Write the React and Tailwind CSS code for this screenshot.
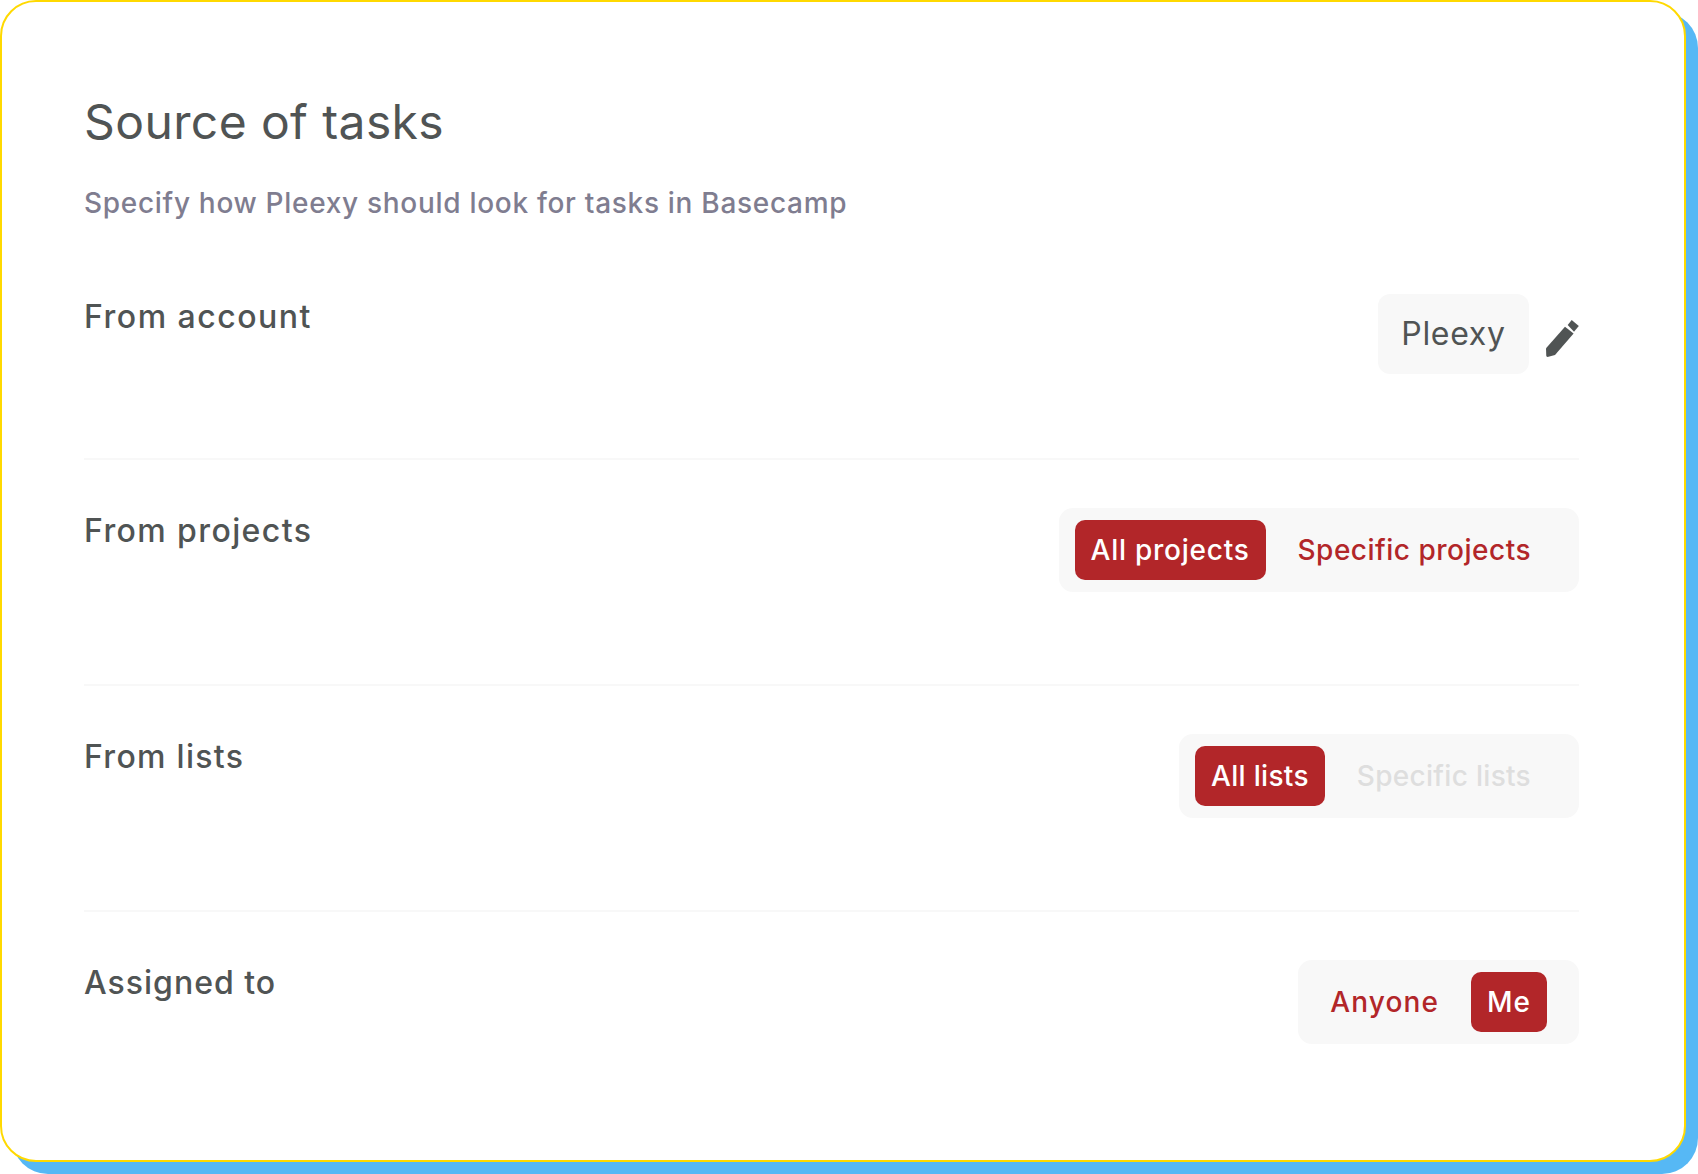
function Option({ label, active, muted, className }) {
  return (
    <button
      className={`h-[60px] px-4 rounded-[10px] text-[28px] font-medium whitespace-nowrap ${
        active ? 'bg-[#b22629] text-white' : muted ? 'text-[#dedede]' : 'text-[#b22629]'
      } ${className}`}
    >
      {label}
    </button>
  );
}

function Toggle({ children }) {
  return (
    <div className="flex items-center gap-4 h-[84px] pl-4 pr-8 rounded-[14px] bg-[#f8f8f8]">
      {children}
    </div>
  );
}

function Row({ label, tracking, last, className, children }) {
  return (
    <div className={`flex items-start justify-between ${last ? '' : 'border-b-2 border-[#f8f8f8]'} ${className}`}>
      <span className={`text-[32px] leading-[46px] font-medium text-[#505454] ${tracking}`}>{label}</span>
      {children}
    </div>
  );
}

export default function App() {
  return (
    <div className="w-[1698px] h-[1174px] bg-white" style={{ fontFamily: 'Inter, sans-serif' }}>
      <div className="w-[1686px] h-[1162px] pt-[90px] pl-[82px] pr-[105px] bg-white border-2 border-[#ffd900] rounded-[36px] shadow-[12px_12px_0_0_#56b8f5]">
        <h1 className="text-[48px] leading-[60px] font-normal text-[#505454] tracking-[0.4px]">Source of tasks</h1>
        <p className="mt-[31px] text-[28px] leading-[40px] font-medium text-[#7f7d90] tracking-[0.7px]">
          Specify how Pleexy should look for tasks in Basecamp
        </p>

        <div className="mt-[71px] flex flex-col gap-12">
          <Row label="From account" tracking="tracking-[1.5px]" className="pb-[84px]">
            <div className="flex items-start">
              <div className="flex items-center justify-center w-[151px] h-[80px] rounded-[12px] bg-[#f8f8f8] text-[32px] text-[#505454] tracking-[0.7px]">
                Pleexy
              </div>
              <svg className="ml-[17px] mt-[26px]" width="33" height="37" viewBox="0 0 33 37" fill="#505454">
                <path d="M0 28.3 19 6.7 27.6 13.5 9 35 1.5 37 0.3 36.2Z" />
                <path d="M21.7 5 25.7 0 32.8 6 28 11.7Z" />
              </svg>
            </div>
          </Row>

          <Row label="From projects" tracking="tracking-[1.4px]" className="pb-[92px]">
            <Toggle>
              <Option label="All projects" active className="tracking-[0.75px]" />
              <Option label="Specific projects" className="tracking-[0.5px]" />
            </Toggle>
          </Row>

          <Row label="From lists" tracking="tracking-[1.3px]" className="pb-[92px]">
            <Toggle>
              <Option label="All lists" active className="tracking-[0.3px]" />
              <Option label="Specific lists" muted className="tracking-[0.3px]" />
            </Toggle>
          </Row>

          <Row label="Assigned to" tracking="tracking-[1px]" last>
            <Toggle>
              <Option label="Anyone" className="tracking-[1.1px]" />
              <Option label="Me" active className="tracking-[1px]" />
            </Toggle>
          </Row>
        </div>
      </div>
    </div>
  );
}
